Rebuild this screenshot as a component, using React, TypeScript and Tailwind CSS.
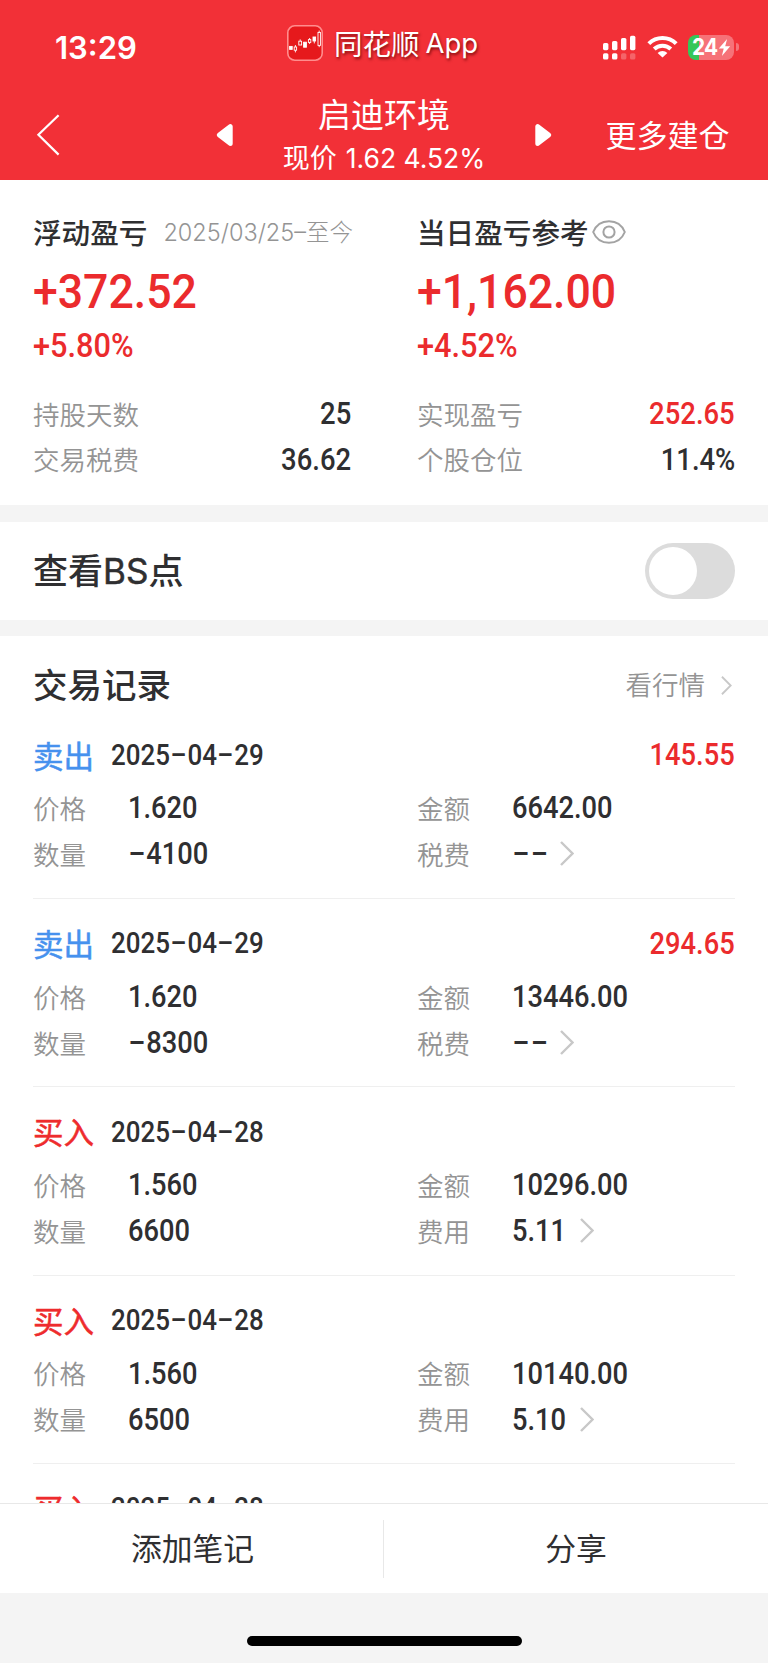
import React from "react";

const CJK = "font-['Noto_Sans_CJK_SC',sans-serif]";
const LATIN = "font-['Inter','Noto_Sans_CJK_SC',sans-serif]";
const NUM = "inline-block whitespace-nowrap font-['Roboto',sans-serif] font-medium leading-none";

type Trade = {
  side: "卖出" | "买入";
  date: string;
  profit?: string;
  details?: {
    price: string;
    amount: string;
    qty: string;
    feeLabel: string;
    fee: string;
  };
};

const trades: Trade[] = [
  { side: "卖出", date: "2025-04-29", profit: "145.55", details: { price: "1.620", amount: "6642.00", qty: "-4100", feeLabel: "税费", fee: "--" } },
  { side: "卖出", date: "2025-04-29", profit: "294.65", details: { price: "1.620", amount: "13446.00", qty: "-8300", feeLabel: "税费", fee: "--" } },
  { side: "买入", date: "2025-04-28", details: { price: "1.560", amount: "10296.00", qty: "6600", feeLabel: "费用", fee: "5.11" } },
  { side: "买入", date: "2025-04-28", details: { price: "1.560", amount: "10140.00", qty: "6500", feeLabel: "费用", fee: "5.10" } },
  { side: "买入", date: "2025-04-28" },
];

/** Widens the hyphens of a number and lifts them to the middle of the digits. */
function Digits({ text }: { text: string }) {
  return (
    <>
      {text.split(/(-)/).map((part, i) =>
        part === "-" ? (
          <span key={i} className="inline-block w-[0.67em] -translate-y-[0.04em] scale-x-[1.85] text-center">-</span>
        ) : (
          part
        ),
      )}
    </>
  );
}

function Value({ text }: { text: string }) {
  return (
    <span className={`${NUM} -mt-[2px] origin-left scale-x-[0.88] text-[31px] text-[#2f2f31]`}>
      <Digits text={text} />
    </span>
  );
}

function Chevron({ className }: { className: string }) {
  return (
    <svg viewBox="0 0 14 25" className={className} fill="none" stroke="#c8c8c8" strokeWidth="2.4">
      <path d="M1 1 L12.5 12.5 L1 24" />
    </svg>
  );
}

function StatusBar() {
  return (
    <div className="flex h-[90px] items-start">
      <div className={`${LATIN} ml-[55px] mt-[32px] w-[231px] text-[31px] font-semibold leading-[31px]`}>13:29</div>
      <svg viewBox="0 0 38 38" className="mt-[24px] size-[38px]" fill="none">
        <rect x="1.8" y="1.8" width="34.4" height="34.4" rx="7" fill="#e6191c" stroke="#ff8d8d" strokeWidth="1.6" />
        <g stroke="#fff" strokeWidth="0.9">
          <rect x="3.6" y="22.4" width="2.6" height="3" fill="#fff" />
          <rect x="8.2" y="23" width="2.4" height="3.2" />
          <path d="M9.4 21V23M9.4 26.2V28.4" />
          <rect x="12.8" y="17.2" width="2.8" height="3.8" />
          <path d="M14.2 15.4V17.2" />
          <rect x="17.6" y="18.2" width="2.8" height="5" fill="#fff" />
          <rect x="22.4" y="15.6" width="2.4" height="2.8" />
          <path d="M23.6 14V15.6M23.6 18.4V20" />
          <rect x="27" y="13" width="2.6" height="4" fill="#fff" />
          <path d="M28.3 17V19.4" />
          <rect x="32" y="8.4" width="2.4" height="13" />
          <path d="M33.2 6.6V8.4M33.2 21.4V23.2" />
        </g>
      </svg>
      <div className={`${CJK} ml-[10px] mt-[28px] flex w-[268px] items-center text-[28.5px] leading-[30px] [text-shadow:1px_2px_3px_rgba(90,0,0,0.75)]`}>
        同花顺
        <span className="ml-[6px] font-['Inter',sans-serif] text-[27.5px]">App</span>
      </div>
      <svg viewBox="0 0 34 26" className="mt-[35px] h-[26px] w-[34px]" fill="#fff">
        <rect x="1" y="8" width="5.4" height="7.2" rx="1.6" />
        <rect x="10" y="6" width="5.4" height="9.2" rx="1.6" />
        <rect x="19" y="3" width="5.4" height="12.2" rx="1.6" />
        <rect x="28" y="0.8" width="5.4" height="14.4" rx="1.6" />
        <rect x="1" y="18.2" width="5.4" height="6.3" rx="1.6" />
        <rect x="10" y="18.2" width="5.4" height="6.3" rx="1.6" />
        <rect x="19" y="18.2" width="5.4" height="6.3" rx="1.6" opacity="0.25" />
        <rect x="28" y="18.2" width="5.4" height="6.3" rx="1.6" opacity="0.25" />
      </svg>
      <svg viewBox="0 0 31 23" className="ml-[11px] mt-[35px] h-[23px] w-[31px]" fill="none" stroke="#fff" strokeWidth="4">
        <path d="M1.8 8.6 A19.5 19.5 0 0 1 29.2 8.6" />
        <path d="M7.2 14 A12 12 0 0 1 23.8 14" />
        <path d="M15.5 22.6 L10.6 17.9 A7 7 0 0 1 20.4 17.9 Z" fill="#fff" stroke="none" />
      </svg>
      <div className="ml-[10px] mt-[35px] flex h-[25px] w-[46px] items-center rounded-[8px] bg-[linear-gradient(90deg,#34c759_11px,#f67278_11px)] pl-[4px]">
        <span className={`${LATIN} w-[26px] origin-left scale-x-[0.93] text-[22.5px] font-bold leading-none tracking-[-0.8px]`}>24</span>
        <svg viewBox="0 0 12 17" className="h-[17px] w-[13px]" fill="#fff">
          <path d="M8.6 0 L0.3 9.6 H5.2 L3.4 17 L11.7 7.2 H6.7 Z" />
        </svg>
      </div>
      <div className="ml-[2px] mt-[43px] h-[8px] w-[2.5px] rounded-r-full bg-[#f67278]" />
    </div>
  );
}

function NavBar() {
  return (
    <div className="flex h-[90px]">
      <svg viewBox="0 0 24 42" className="ml-[36px] mt-[24px] h-[42px] w-[24px]" fill="none" stroke="#fff" strokeWidth="2.2">
        <path d="M22.6 1.2 L2.4 20.8 L22.6 40.6" />
      </svg>
      <svg viewBox="0 0 17 24" className="ml-[156px] mt-[33px] h-[24px] w-[17px]" fill="#fff" stroke="#fff" strokeWidth="5" strokeLinejoin="round">
        <path d="M14.2 3.6 V20.4 L3.4 12 Z" />
      </svg>
      <div className={`${CJK} flex w-[302px] flex-col items-center`}>
        <div className="mt-[6px] text-[33px] leading-[34px]">启迪环境</div>
        <div className="mt-[11px] flex items-center whitespace-nowrap text-[27px] leading-[30px]">
          现价<span className="ml-[9px] mt-[2px] font-['Inter',sans-serif] text-[26.5px]">1.62 4.52%</span>
        </div>
      </div>
      <svg viewBox="0 0 17 24" className="mt-[33px] h-[24px] w-[17px]" fill="#fff" stroke="#fff" strokeWidth="5" strokeLinejoin="round">
        <path d="M2.8 3.6 V20.4 L13.6 12 Z" />
      </svg>
      <div className={`${CJK} ml-[53.5px] mt-[28px] whitespace-nowrap text-[31px] leading-[31px]`}>更多建仓</div>
    </div>
  );
}

type SummaryProps = {
  title: React.ReactNode;
  extra: React.ReactNode;
  total: string;
  percent: string;
  rows: { label: string; value: string; red?: boolean }[];
};

function Summary({ title, extra, total, percent, rows }: SummaryProps) {
  return (
    <div className="flex w-[318px] flex-col">
      <div className={`${CJK} mt-[33px] flex h-[38px] items-center whitespace-nowrap text-[28.6px] font-medium leading-none text-[#2f2f31]`}>
        {title}
        {extra}
      </div>
      <div className="mt-[16px] flex h-[48px] items-center text-[#eb2b2d]">
        <span className={`${NUM} origin-left scale-x-[0.91] text-[49px]`}>{total}</span>
      </div>
      <div className="mt-[12px] flex h-[38px] items-center text-[#eb2b2d]">
        <span className={`${NUM} origin-left scale-x-[0.945] text-[32.5px]`}>{percent}</span>
      </div>
      <div className="mt-[26px]">
        {rows.map((r) => (
          <div key={r.label} className="flex h-[45.5px] items-center justify-between">
            <span className={`${CJK} text-[26.5px] font-[350] leading-none text-[#949494]`}>{r.label}</span>
            <span className={`${NUM} origin-right scale-x-[0.885] text-[31px] ${r.red ? "text-[#eb2b2d]" : "text-[#2f2f31]"}`}>{r.value}</span>
          </div>
        ))}
      </div>
    </div>
  );
}

function TradeRecord({ t }: { t: Trade }) {
  const label = `${CJK} -mt-[1px] w-[95px] text-[26.5px] font-[350] leading-none text-[#949494]`;
  const row = "flex h-[46px] items-center";
  const d = t.details;
  return (
    <div className="mx-[33px] h-[188.4px] shrink-0 border-b border-[#efefef] pt-[22px]">
      <div className="flex h-[46px] items-center">
        <span className={`${CJK} -mt-[1px] w-[78px] text-[30.5px] leading-none [-webkit-text-stroke:0.5px_currentColor] ${t.side === "卖出" ? "text-[#4691ee]" : "text-[#ee2b2d]"}`}>{t.side}</span>
        <span className={`${NUM} origin-left scale-x-[0.895] text-[29px] text-[#2f2f31]`}>
          <Digits text={t.date} />
        </span>
        {t.profit && <span className={`${NUM} -mt-[1px] ml-auto origin-right scale-x-[0.88] text-[31px] text-[#eb2b2d]`}>{t.profit}</span>}
      </div>
      {d && (
        <div className="mt-[7.5px] grid grid-cols-[384px_1fr]">
          <div className={row}><span className={label}>价格</span><Value text={d.price} /></div>
          <div className={row}><span className={label}>金额</span><Value text={d.amount} /></div>
          <div className={row}><span className={label}>数量</span><Value text={d.qty} /></div>
          <div className={row}>
            <span className={label}>{d.feeLabel}</span>
            <Value text={d.fee} />
            <Chevron className="-mt-[2px] ml-[6.5px] h-[25px] w-[14px]" />
          </div>
        </div>
      )}
    </div>
  );
}

export default function App() {
  return (
    <div className="flex h-[1663px] w-[768px] flex-col overflow-hidden bg-[#f4f4f4]">
      <header className="h-[180px] shrink-0 bg-[#f23037] text-white">
        <StatusBar />
        <NavBar />
      </header>

      <section className="flex h-[325px] shrink-0 gap-[66px] bg-white px-[33px]">
        <Summary
          title="浮动盈亏"
          extra={<span className="ml-[16px] mt-[1px] font-['Inter','Noto_Sans_CJK_SC',sans-serif] text-[23.5px] font-light text-[#949494]">2025/03/25–至今</span>}
          total="+372.52"
          percent="+5.80%"
          rows={[{ label: "持股天数", value: "25" }, { label: "交易税费", value: "36.62" }]}
        />
        <Summary
          title="当日盈亏参考"
          extra={
            <svg viewBox="0 0 34 24" className="ml-[3px] h-[24px] w-[34px]" fill="none" stroke="#a3a3a3" strokeWidth="2">
              <path d="M1.2 12 C4 5 10 1.2 17 1.2 S30 5 32.8 12 C30 19 24 22.8 17 22.8 S4 19 1.2 12 Z" />
              <circle cx="17" cy="12" r="5.6" />
            </svg>
          }
          total="+1,162.00"
          percent="+4.52%"
          rows={[{ label: "实现盈亏", value: "252.65", red: true }, { label: "个股仓位", value: "11.4%" }]}
        />
      </section>

      <section className={`${CJK} mt-[17px] flex h-[98px] shrink-0 items-center justify-between bg-white px-[33px] text-[35px] font-medium leading-none text-[#2f2f31]`}>
        <span className="-mt-[2px]">查看<span className="font-['Inter',sans-serif] text-[35px] font-normal [-webkit-text-stroke:0.5px_currentColor]">BS</span>点</span>
        <div className="flex h-[56px] w-[90px] items-center rounded-full bg-[#dcdcdc] px-[4px]">
          <div className="size-[48px] rounded-full bg-white" />
        </div>
      </section>

      <section className="mt-[16px] flex h-[867px] shrink-0 flex-col overflow-hidden bg-white">
        <div className={`${CJK} flex h-[74.4px] shrink-0 items-center px-[33px] pt-[22px]`}>
          <span className="-mt-[2px] text-[34.5px] font-medium leading-none text-[#2f2f31]">交易记录</span>
          <span className="ml-auto text-[26.5px] font-[350] leading-none text-[#949494]">看行情</span>
          <Chevron className="ml-[16px] mr-[3px] mt-[2px] h-[19px] w-[11px]" />
        </div>
        {trades.map((t, i) => (
          <TradeRecord key={i} t={t} />
        ))}
      </section>

      <footer className={`${CJK} grid h-[90px] shrink-0 grid-cols-2 items-center border-t border-[#e8e8e8] bg-white text-[30.8px] leading-none text-[#2f2f31]`}>
        <div className="flex h-[58px] items-center justify-center border-r border-[#e8e8e8] pb-[2px] pl-[2px]">添加笔记</div>
        <div className="flex h-[58px] items-center justify-center pb-[2px]">分享</div>
      </footer>
      <div className="flex h-[70px] shrink-0 items-start justify-center pt-[43px]">
        <div className="h-[10px] w-[275px] rounded-full bg-black" />
      </div>
    </div>
  );
}
